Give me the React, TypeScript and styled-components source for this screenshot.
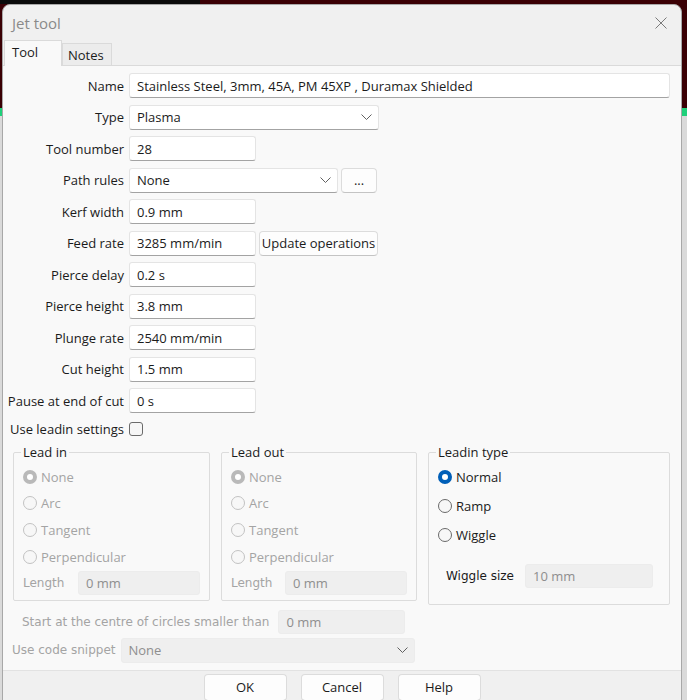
import React from 'react';
import styled, { createGlobalStyle } from 'styled-components';

const UI_FONT = `"Open Sans", "Noto Sans", sans-serif`;
const OLD_FONT = `"DejaVu Sans", "Liberation Sans", sans-serif`;

const GlobalStyle = createGlobalStyle`
  html, body {
    margin: 0;
    padding: 0;
  }
  body {
    font-family: ${UI_FONT};
    font-size: 13px;
    color: #1b1b1b;
  }
`;

const Desktop = styled.div`
  width: 687px;
  height: 700px;
  overflow: hidden;
  box-sizing: border-box;
  padding: 4px 0 0 2px;
  background:
    linear-gradient(to right, #0a0a0a 0 200px, transparent 200px) top left / 100% 4px no-repeat,
    linear-gradient(to bottom, #3a0004 0 108px, #1fd07a 108px 116px, #dadada 116px);
`;

const Window = styled.div`
  width: 680px;
  height: 720px;
  box-sizing: border-box;
  display: flex;
  flex-direction: column;
  background: #f0f0f0;
  border: 1px solid #a8a8a8;
  border-radius: 8px 8px 0 0;
  overflow: hidden;
`;

const TitleBar = styled.div`
  height: 35px;
  flex: none;
  display: flex;
  align-items: center;
  justify-content: space-between;
  padding: 0 14px 0 9px;
`;

const Title = styled.span`
  font-size: 15px;
  color: #8a8a8a;
`;

const TabStrip = styled.div`
  display: flex;
  align-items: flex-end;
  height: 25px;
  padding-left: 1px;
  flex: none;
`;

const Tab = styled.div<{ $active?: boolean }>`
  box-sizing: border-box;
  height: ${p => (p.$active ? '26px' : '22px')};
  margin-bottom: ${p => (p.$active ? '-1px' : '0')};
  padding: ${p => (p.$active ? '2px 0 0 7px' : '2px 0 0 5px')};
  width: ${p => (p.$active ? '58px' : '50px')};
  background: ${p => (p.$active ? '#f9f9f9' : '#ececec')};
  border: 1px solid #dadada;
  border-bottom: none;
  position: relative;
  z-index: ${p => (p.$active ? 1 : 0)};
`;

const Panel = styled.div`
  flex: none;
  background: #f9f9f9;
  border-top: 1px solid #dadada;
  padding-top: 7px;
  display: flex;
  flex-direction: column;
`;

const Form = styled.div`
  display: grid;
  grid-template-columns: 117px 1fr;
  grid-auto-rows: 25px;
  column-gap: 5px;
  row-gap: 6.5px;
  padding: 0 11px 0 4px;
`;

const Label = styled.div`
  display: flex;
  align-items: center;
  justify-content: flex-end;
  white-space: nowrap;
`;

const Controls = styled.div`
  display: flex;
  gap: 3px;
  align-items: center;
`;

const Field = styled.div<{ $w?: number; $h?: number; $disabled?: boolean }>`
  box-sizing: border-box;
  width: ${p => (p.$w ? `${p.$w}px` : '100%')};
  height: ${p => p.$h ?? 25}px;
  flex: none;
  display: flex;
  align-items: center;
  justify-content: space-between;
  padding: 0 6px 0 7px;
  background: ${p => (p.$disabled ? '#efefef' : '#ffffff')};
  border: 1px solid ${p => (p.$disabled ? '#ececec' : '#e4e4e4')};
  border-bottom-color: ${p => (p.$disabled ? '#ececec' : '#a3a3a3')};
  border-radius: 3px;
  color: ${p => (p.$disabled ? '#8e8e8e' : '#1b1b1b')};
  white-space: nowrap;
`;

const Button = styled.div<{ $w: number; $h?: number }>`
  box-sizing: border-box;
  width: ${p => p.$w}px;
  height: ${p => p.$h ?? 25}px;
  flex: none;
  display: flex;
  align-items: center;
  justify-content: center;
  background: #fdfdfd;
  border: 1px solid #dcdcdc;
  border-bottom-color: #c4c4c4;
  border-radius: 4px;
  color: #1b1b1b;
  white-space: nowrap;
`;

const CheckRow = styled.div`
  grid-column: 1 / -1;
  display: grid;
  grid-template-columns: 117px 1fr;
  column-gap: 5px;
  height: 19px;
`;

const CheckBox = styled.span`
  box-sizing: border-box;
  width: 14px;
  height: 14px;
  align-self: center;
  border: 1px solid #6a6a6a;
  border-radius: 3px;
  background: #f6f6f6;
`;

const Groups = styled.div`
  display: grid;
  grid-template-columns: 197px 196px 1fr;
  column-gap: 11px;
  align-items: start;
  padding: 0 11px 0 10px;
  margin-top: -1px;
`;

const Group = styled.fieldset<{ $pb: number; $pr?: number }>`
  margin: 0;
  min-width: 0;
  padding: 6px ${p => p.$pr ?? 9}px ${p => p.$pb}px 9px;
  border: 1px solid #dcdcdc;
  border-radius: 2px;
  display: flex;
  flex-direction: column;
`;

const Legend = styled.legend`
  padding: 0 2px;
  margin-left: -2px;
  line-height: 17px;
  color: #1b1b1b;
`;

const RadioList = styled.div<{ $gap: number }>`
  display: flex;
  flex-direction: column;
  gap: ${p => p.$gap}px;
`;

const RadioRow = styled.div<{ $disabled?: boolean }>`
  display: flex;
  align-items: center;
  gap: 4px;
  height: 20px;
  color: ${p => (p.$disabled ? '#a4a4a4' : '#1b1b1b')};
`;

const RadioDot = styled.span<{ $checked?: boolean; $disabled?: boolean }>`
  box-sizing: border-box;
  width: 14px;
  height: 14px;
  border-radius: 50%;
  flex: none;
  background: ${p => (p.$checked ? '#ffffff' : '#f7f7f7')};
  border: ${p =>
    p.$checked
      ? `4px solid ${p.$disabled ? '#b9b9b9' : '#005fb8'}`
      : `1px solid ${p.$disabled ? '#c2c2c2' : '#6a6a6a'}`};
`;

const SubRow = styled.div<{ $mt: number; $indent?: number }>`
  display: flex;
  align-items: center;
  justify-content: space-between;
  margin-top: ${p => p.$mt}px;
  padding-left: ${p => p.$indent ?? 0}px;
`;

const OldLabel = styled.span<{ $disabled?: boolean }>`
  font-family: ${OLD_FONT};
  font-size: 12px;
  color: ${p => (p.$disabled ? '#a4a4a4' : '#1b1b1b')};
  white-space: nowrap;
`;

const LineRow = styled.div<{ $mt: number; $pl: number; $gap: number }>`
  display: flex;
  align-items: center;
  gap: ${p => p.$gap}px;
  margin-top: ${p => p.$mt}px;
  padding-left: ${p => p.$pl}px;
`;

const Footer = styled.div`
  margin-top: 7px;
  border-top: 1px solid #e2e2e2;
  background: #f0f0f0;
  display: flex;
  justify-content: center;
  gap: 14px;
  padding-top: 3px;
  height: 60px;
  box-sizing: border-box;
`;

const Chevron = () => (
  <svg width="11" height="6" viewBox="0 0 11 6">
    <path d="M0.5 0.5 L5.5 5.5 L10.5 0.5" fill="none" stroke="#606060" strokeWidth="1" />
  </svg>
);

const CloseIcon = () => (
  <svg width="12" height="12" viewBox="0 0 12 12">
    <path d="M0.5 0.5 L11.5 11.5 M11.5 0.5 L0.5 11.5" fill="none" stroke="#7a7a7a" strokeWidth="1" />
  </svg>
);

type Radio = { label: string; checked?: boolean };

const leadItems: Radio[] = [
  { label: 'None', checked: true },
  { label: 'Arc' },
  { label: 'Tangent' },
  { label: 'Perpendicular' },
];

const typeItems: Radio[] = [
  { label: 'Normal', checked: true },
  { label: 'Ramp' },
  { label: 'Wiggle' },
];

const simpleRows: [string, string][] = [
  ['Pierce delay', '0.2 s'],
  ['Pierce height', '3.8 mm'],
  ['Plunge rate', '2540 mm/min'],
  ['Cut height', '1.5 mm'],
  ['Pause at end of cut', '0 s'],
];

const LeadGroup = ({ title }: { title: string }) => (
  <Group $pb={5}>
    <Legend>{title}</Legend>
    <RadioList $gap={6.7}>
      {leadItems.map(r => (
        <RadioRow key={r.label} $disabled>
          <RadioDot $checked={r.checked} $disabled />
          {r.label}
        </RadioRow>
      ))}
    </RadioList>
    <SubRow $mt={4}>
      <OldLabel $disabled>Length</OldLabel>
      <Field $w={122} $h={24} $disabled>0 mm</Field>
    </SubRow>
  </Group>
);

const App = () => (
  <Desktop>
    <GlobalStyle />
    <Window>
      <TitleBar>
        <Title>Jet tool</Title>
        <CloseIcon />
      </TitleBar>
      <TabStrip>
        <Tab $active>Tool</Tab>
        <Tab>Notes</Tab>
      </TabStrip>
      <Panel>
        <Form>
          <Label>Name</Label>
          <Controls>
            <Field>Stainless Steel, 3mm, 45A, PM 45XP , Duramax Shielded</Field>
          </Controls>

          <Label>Type</Label>
          <Controls>
            <Field $w={250}>
              Plasma
              <Chevron />
            </Field>
          </Controls>

          <Label>Tool number</Label>
          <Controls>
            <Field $w={127}>28</Field>
          </Controls>

          <Label>Path rules</Label>
          <Controls>
            <Field $w={209}>
              None
              <Chevron />
            </Field>
            <Button $w={36}>...</Button>
          </Controls>

          <Label>Kerf width</Label>
          <Controls>
            <Field $w={127}>0.9 mm</Field>
          </Controls>

          <Label>Feed rate</Label>
          <Controls>
            <Field $w={127}>3285 mm/min</Field>
            <Button $w={119}>Update operations</Button>
          </Controls>

          {simpleRows.map(([label, value]) => (
            <React.Fragment key={label}>
              <Label>{label}</Label>
              <Controls>
                <Field $w={127}>{value}</Field>
              </Controls>
            </React.Fragment>
          ))}

          <CheckRow>
            <Label>Use leadin settings</Label>
            <CheckBox />
          </CheckRow>
        </Form>

        <Groups>
          <LeadGroup title="Lead in" />
          <LeadGroup title="Lead out" />
          <Group $pb={16} $pr={16}>
            <Legend>Leadin type</Legend>
            <RadioList $gap={9}>
              {typeItems.map(r => (
                <RadioRow key={r.label}>
                  <RadioDot $checked={r.checked} />
                  {r.label}
                </RadioRow>
              ))}
            </RadioList>
            <SubRow $mt={19} $indent={8}>
              <OldLabel>Wiggle size</OldLabel>
              <Field $w={128} $h={24} $disabled>10 mm</Field>
            </SubRow>
          </Group>
        </Groups>

        <LineRow $mt={5} $pl={19} $gap={9}>
          <OldLabel $disabled>Start at the centre of circles smaller than</OldLabel>
          <Field $w={127} $h={24} $disabled>0 mm</Field>
        </LineRow>

        <LineRow $mt={4} $pl={9} $gap={5}>
          <OldLabel $disabled>Use code snippet</OldLabel>
          <Field $w={294} $disabled>
            None
            <Chevron />
          </Field>
        </LineRow>

        <Footer>
          <Button $w={83} $h={27}>OK</Button>
          <Button $w={83} $h={27}>Cancel</Button>
          <Button $w={83} $h={27}>Help</Button>
        </Footer>
      </Panel>
    </Window>
  </Desktop>
);

export default App;
